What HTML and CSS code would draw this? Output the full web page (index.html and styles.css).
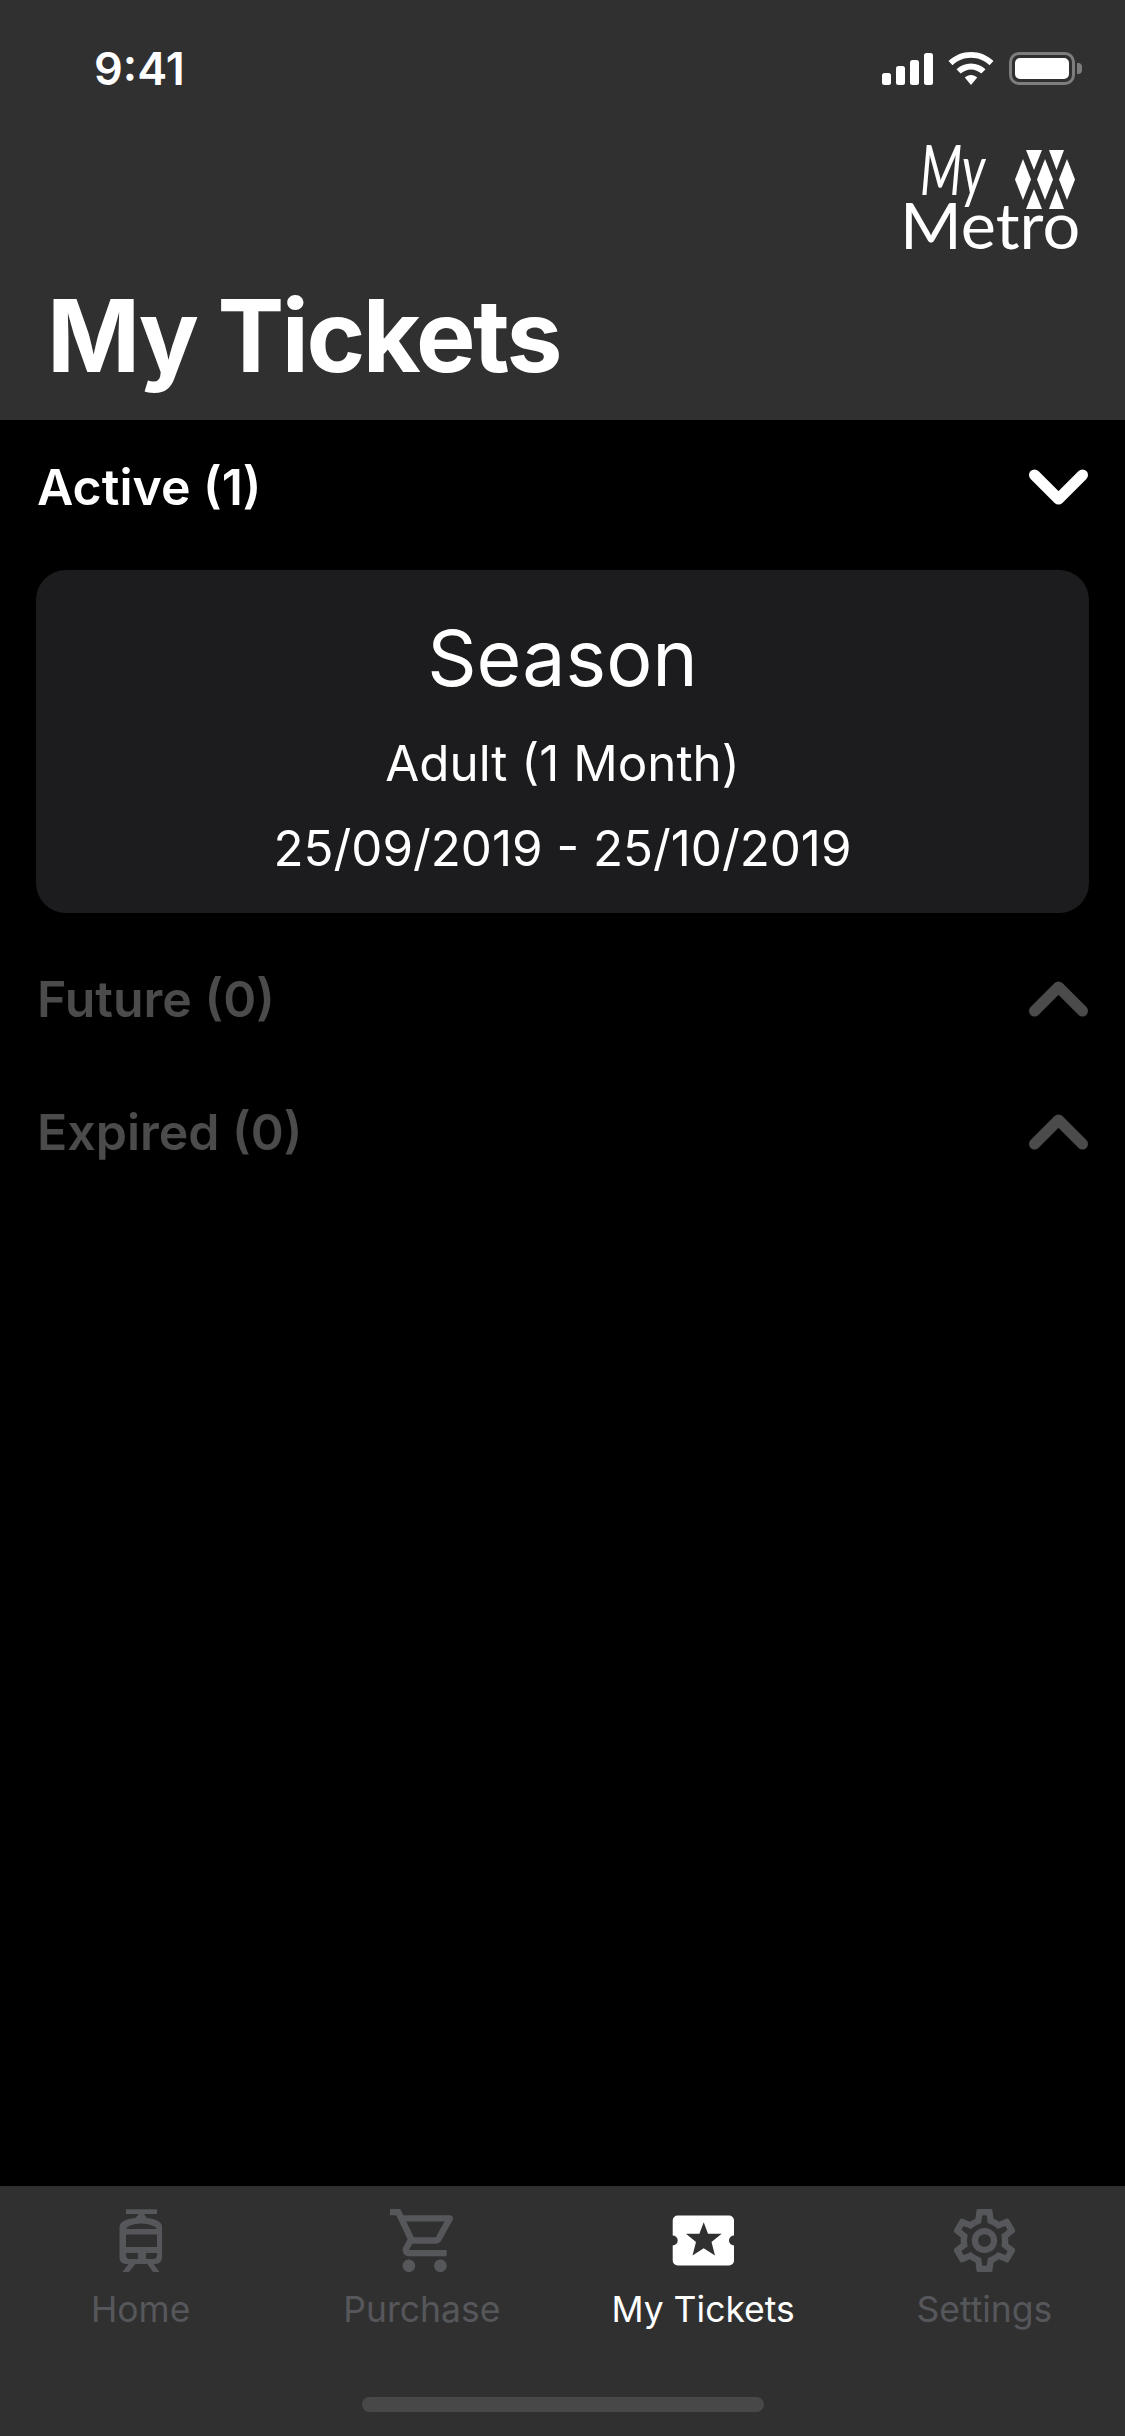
FILE: index.html
```html
<!DOCTYPE html>
<html>
    <head>
        <meta charset="utf-8">
        <title>My Tickets</title>
        <link rel="stylesheet" href="styles.css">
    </head>
    <body>
    <div class="phone">
        <header class="header">
            <div class="status">
                <span class="time">9:41</span>
                <div class="status-icons">
                    <svg class="signal" viewBox="0 0 51 32" width="51" height="32">
                        <rect x="0" y="20" width="9" height="12" rx="2.5"/>
                        <rect x="14" y="13" width="9" height="19" rx="2.5"/>
                        <rect x="28" y="7" width="9" height="25" rx="2.5"/>
                        <rect x="42" y="0" width="9" height="32" rx="2.5"/>
                    </svg>
                    <svg class="wifi" viewBox="0 0 46 33" width="46" height="33">
                        <path d="M23 0C14.500 0 6.600 3.300 0.500 9L4.500 13.300C9.500 8.500 16 5.800 23 5.800C30 5.800 36.500 8.500 41.500 13.300L45.500 9C39.400 3.300 31.500 0 23 0Z"/>
                        <path d="M23 11.500C17.500 11.500 12.500 13.600 8.500 17.300L12.600 21.600C15.500 19 19.100 17.400 23 17.400C26.900 17.400 30.500 19 33.400 21.600L37.500 17.300C33.500 13.600 28.500 11.500 23 11.500Z"/>
                        <path d="M23 23C20.700 23 18.500 23.900 16.800 25.400L23 33L29.200 25.400C27.500 23.900 25.300 23 23 23Z"/>
                    </svg>
                    <div class="battery">
                        <div class="battery-body"><div class="battery-fill"></div></div>
                        <div class="battery-nub"></div>
                    </div>
                </div>
            </div>
            <div class="logo-row">
                <div class="logo">
                    <div class="logo-top">
                        <span class="logo-my">My</span>
                        <svg class="logo-mark" viewBox="115 15 60 59" width="60" height="59">
                            <polygon points="126,15 142,15 134,35"/>
                            <polygon points="149,15 164,15 156.500,35"/>
                            <polygon points="123,24 131,44.500 123,65 115,44.500"/>
                            <polygon points="145,24 153,44.500 145,65 137,44.500"/>
                            <polygon points="167,24 175,44.500 167,65 159,44.500"/>
                            <polygon points="134,54 142,74 126,74"/>
                            <polygon points="156.500,54 164,74 149,74"/>
                        </svg>
                    </div>
                    <div class="logo-metro">Metro</div>
                </div>
            </div>
            <h1 class="title">My Tickets</h1>
        </header>

        <main class="content">
            <div class="section-head">
                <span>Active (1)</span>
                <svg class="chevron" viewBox="0 0 61 36" width="61" height="36"><path d="M6.500 6L30.500 30L54.500 6"/></svg>
            </div>
            <div class="ticket">
                <div class="ticket-name">Season</div>
                <div class="ticket-line ticket-type">Adult (1 Month)</div>
                <div class="ticket-line">25/09/2019 - 25/10/2019</div>
            </div>
            <div class="section-head dim">
                <span>Future (0)</span>
                <svg class="chevron" viewBox="0 0 61 36" width="61" height="36"><path d="M6.500 30L30.500 6L54.500 30"/></svg>
            </div>
            <div class="section-head dim">
                <span>Expired (0)</span>
                <svg class="chevron" viewBox="0 0 61 36" width="61" height="36"><path d="M6.500 30L30.500 6L54.500 30"/></svg>
            </div>
        </main>

        <nav class="tabbar">
            <div class="tabs">
                <div class="tab">
                    <svg class="tab-icon" viewBox="13 9 44 63" width="44" height="63">
                        <rect x="20" y="9.300" width="31" height="4.700"/>
                        <polygon points="33,14 38,14 41,18.500 29,18.500"/>
                        <path fill-rule="evenodd" d="M13.500 27Q13.500 18.500 35 17.500Q56 18.500 56 27V57Q56 64 49 64H20Q13.500 64 13.500 57ZM20 29H51Q48 24 35 23.500Q22 24 20 29ZM20 34.500V47H51V34.500ZM20 53V55Q20 59 24 59H32V53ZM40 53V59H47Q51 59 51 55V53Z"/>
                        <polygon points="24,62 31,62 23,72 16.500,72"/>
                        <polygon points="40,62 46,62 53.500,72 47,72"/>
                    </svg>
                    <span>Home</span>
                </div>
                <div class="tab">
                    <svg class="tab-icon" viewBox="1 2 20 20" width="63" height="63"><path d="M15.550 13c.750 0 1.410-.410 1.750-1.030l3.580-6.490c.370-.660-.110-1.480-.870-1.480H5.210l-.940-2H1v2h2l3.600 7.590-1.350 2.440C4.520 15.370 5.480 17 7 17h12v-2H7l1.100-2h7.450zM6.160 6h12.150l-2.760 5H8.530L6.160 6zM7 18c-1.100 0-1.990.900-1.990 2S5.900 22 7 22s2-.900 2-2-.900-2-2-2zm10 0c-1.100 0-1.990.900-1.990 2s.890 2 1.990 2 2-.900 2-2-.900-2-2-2z"/></svg>
                    <span>Purchase</span>
                </div>
                <div class="tab active">
                    <svg class="tab-icon" viewBox="11 3.500 63 63" width="63" height="63">
                        <path class="ticket-shape" d="M16.700 10H68a5 5 0 0 1 5 5V30a5 5 0 0 0 0 10V55a5 5 0 0 1 -5 5H16.700a5 5 0 0 1 -5 -5V40a5 5 0 0 0 0 -10V15a5 5 0 0 1 5 -5Z"/>
                        <polygon class="ticket-star" points="42.700,16.700 47,28.300 60.700,28.300 50.500,36.500 54,50 42.700,42.700 31.500,50 35,36.500 25,28.300 38.400,28.300"/>
                    </svg>
                    <span>My Tickets</span>
                </div>
                <div class="tab">
                    <svg class="tab-icon" viewBox="2.400 2 19.200 20" width="61" height="63" preserveAspectRatio="none"><path d="M19.430 12.980c.040-.320.070-.640.070-.980 0-.340-.030-.660-.070-.980l2.110-1.650c.190-.150.240-.420.120-.640l-2-3.460c-.090-.160-.260-.250-.440-.250-.060 0-.120.010-.170.030l-2.490 1c-.520-.400-1.080-.730-1.690-.980l-.380-2.650C14.460 2.180 14.250 2 14 2h-4c-.250 0-.460.180-.490.420l-.380 2.650c-.610.250-1.170.590-1.690.980l-2.490-1c-.060-.020-.120-.030-.180-.030-.170 0-.340.090-.430.250l-2 3.460c-.130.220-.070.490.12.640l2.110 1.650c-.040.320-.070.650-.070.980 0 .330.030.660.070.980l-2.110 1.650c-.190.150-.240.420-.12.640l2 3.460c.090.160.260.250.440.250.060 0 .120-.010.170-.030l2.490-1c.520.400 1.080.730 1.690.980l.380 2.650c.030.240.240.420.490.42h4c.250 0 .460-.180.490-.42l.380-2.650c.610-.250 1.170-.590 1.690-.980l2.490 1c.060.020.120.030.180.030.170 0 .340-.090.430-.250l2-3.460c.120-.220.070-.490-.12-.64l-2.110-1.650zm-1.980-1.710c.040.310.050.520.050.730 0 .210-.020.430-.05.730l-.14 1.130.890.700 1.080.84-.700 1.210-1.270-.510-1.040-.420-.900.680c-.430.320-.840.560-1.250.730l-1.060.43-.160 1.130-.200 1.350h-1.400l-.190-1.350-.160-1.130-1.060-.430c-.430-.180-.830-.410-1.230-.71l-.91-.700-1.060.43-1.270.510-.700-1.210 1.080-.84.890-.700-.140-1.130c-.030-.310-.050-.540-.050-.740s.020-.430.050-.730l.14-1.130-.89-.700-1.080-.84.700-1.210 1.270.510 1.040.42.900-.68c.430-.32.840-.56 1.250-.73l1.060-.43.160-1.130.200-1.350h1.390l.190 1.350.160 1.130 1.060.43c.430.18.830.41 1.230.71l.91.700 1.060-.43 1.270-.51.700 1.210-1.070.85-.89.700.14 1.130zM12 8c-2.210 0-4 1.790-4 4s1.790 4 4 4 4-1.790 4-4-1.790-4-4-4zm0 6c-1.100 0-2-.900-2-2s.900-2 2-2 2 .900 2 2-.900 2-2 2z"/></svg>
                    <span>Settings</span>
                </div>
            </div>
            <div class="home-bar"></div>
        </nav>
    </div>
    </body>
</html>
```

FILE: styles.css
```css
* {
    box-sizing: border-box;
}
html, body {
    margin: 0;
    padding: 0;
}
body {
    background-color: black;
    color: white;
    font-family: Inter, "Liberation Sans", sans-serif;
}
.phone {
    width: 1125px;
    height: 2436px;
    display: flex;
    flex-direction: column;
}

/* header */
.header {
    height: 420px;
    flex: none;
    background-color: #303030;
    padding: 52px 43px 0 47px;
}
.status {
    display: flex;
    justify-content: space-between;
    align-items: center;
    height: 33px;
}
.time {
    font-size: 45px;
    font-weight: 600;
    line-height: 33px;
    margin-left: 47px;
}
.status-icons {
    display: flex;
    align-items: center;
    gap: 15px;
    fill: white;
}
.battery {
    display: flex;
    align-items: center;
    gap: 2px;
}
.battery-body {
    width: 66px;
    height: 33px;
    border: 3px solid #7d7d7d;
    border-radius: 10px;
    padding: 3px;
}
.battery-fill {
    height: 100%;
    background-color: white;
    border-radius: 5px;
}
.battery-nub {
    width: 5px;
    height: 11px;
    background-color: #7d7d7d;
    border-radius: 0 4px 4px 0;
}
.logo-row {
    display: flex;
    justify-content: flex-end;
    margin-top: 50px;
}
.logo {
    width: 174px;
    height: 120px;
    margin-right: 4px;
    font-family: Lato, sans-serif;
    line-height: 1;
}
.logo-top {
    display: flex;
    height: 65px;
}
.logo-my {
    display: block;
    width: 66px;
    height: 60px;
    margin: 3px 0 0 16px;
    font-size: 70px;
    line-height: 60px;
    font-style: italic;
    transform: scaleX(0.7);
    transform-origin: 0 50%;
}
.logo-mark {
    display: block;
    margin: 15px 3px 0 auto;
    fill: white;
}
.logo-metro {
    margin-left: -4px;
    font-size: 64px;
    line-height: 50px;
    white-space: nowrap;
    transform: scaleX(1.04);
    transform-origin: 0 50%;
}
.title {
    margin: 26px 0 0 0;
    font-size: 100px;
    line-height: 110px;
    font-weight: 700;
    letter-spacing: -2.5px;
}

/* sections */
.content {
    flex: 1;
    padding: 0 36px;
}
.section-head {
    height: 133px;
    display: flex;
    justify-content: space-between;
    align-items: center;
    font-size: 50px;
    font-weight: 600;
    padding-left: 1px;
}
.section-head.dim {
    color: #4b4b4b;
}
.chevron {
    fill: none;
    stroke: white;
    stroke-width: 11;
    stroke-linecap: round;
    stroke-linejoin: round;
}
.dim .chevron {
    stroke: #4b4b4b;
}
.ticket {
    height: 343px;
    margin: 17px 0 19px 0;
    background-color: #1c1c1e;
    border-radius: 30px;
    text-align: center;
    padding-top: 38px;
}
.ticket-name {
    font-size: 77px;
    line-height: 100px;
}
.ticket-line {
    font-size: 49.3px;
    line-height: 60px;
}
.ticket-type {
    margin-top: 25px;
    margin-bottom: 25px;
}

/* tab bar */
.tabbar {
    height: 250px;
    flex: none;
    background-color: #303030;
    display: flex;
    flex-direction: column;
    align-items: center;
    padding-top: 23px;
}
.tabs {
    width: 100%;
    display: flex;
}
.tab {
    flex: 1;
    display: flex;
    flex-direction: column;
    align-items: center;
    font-size: 35.5px;
    line-height: 44px;
    color: #56575b;
    fill: #56575b;
}
.tab span {
    margin-top: 16px;
}
.tab.active {
    color: white;
}
.tab-icon {
    display: block;
}
.ticket-shape {
    fill: white;
}
.ticket-star {
    fill: #303030;
}
.home-bar {
    width: 402px;
    height: 15px;
    margin-top: 65px;
    background-color: #484848;
    border-radius: 8px;
}
```
